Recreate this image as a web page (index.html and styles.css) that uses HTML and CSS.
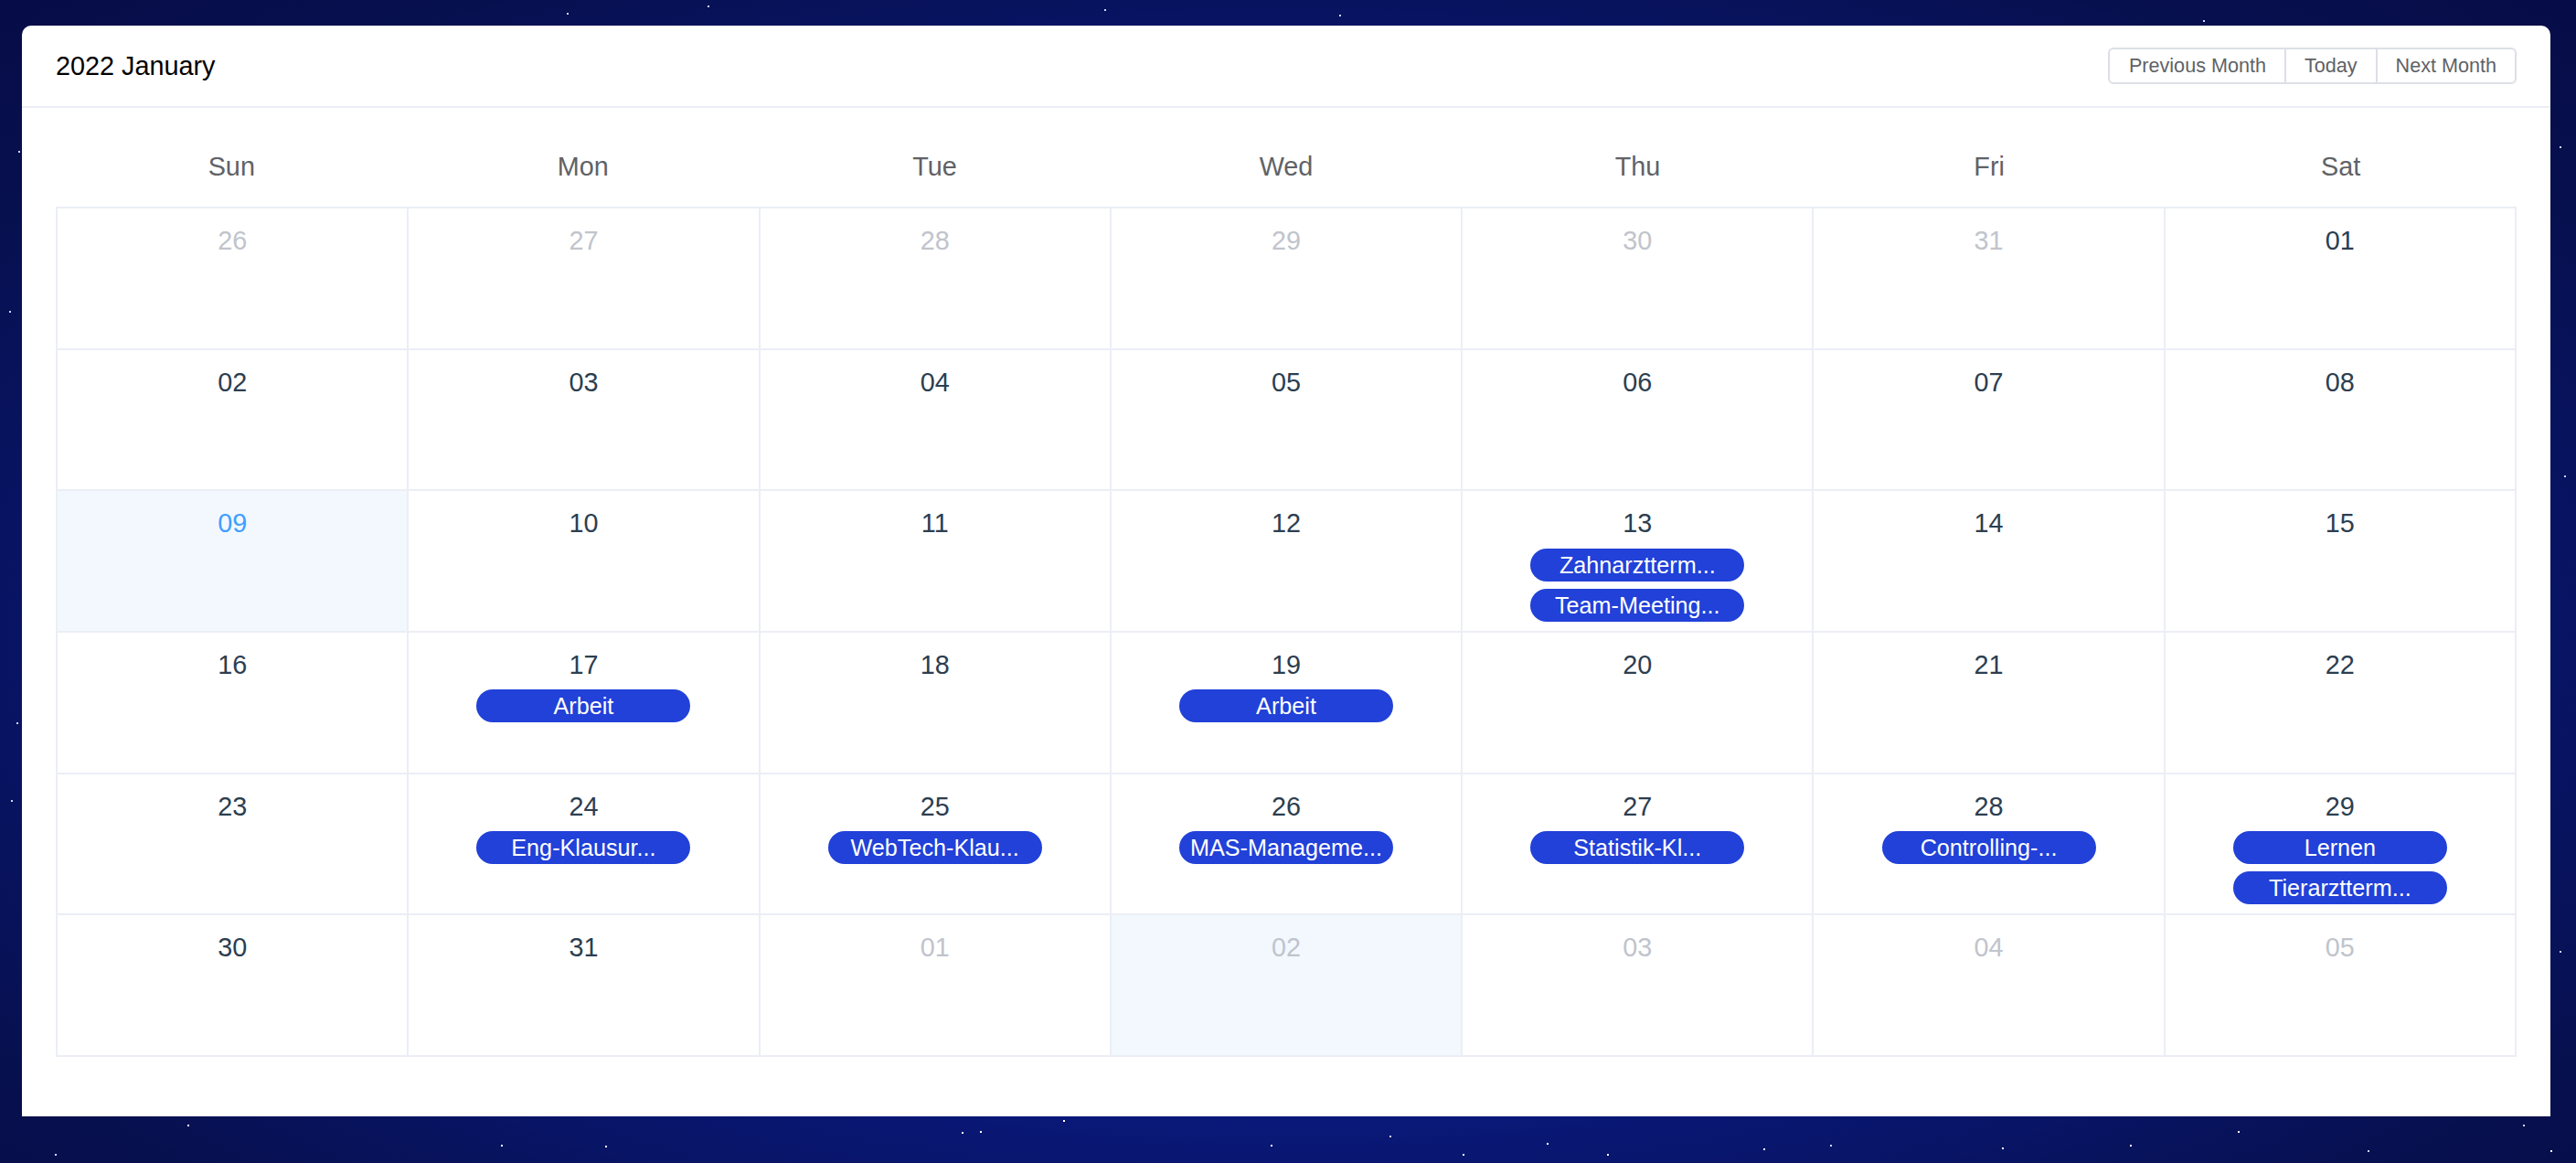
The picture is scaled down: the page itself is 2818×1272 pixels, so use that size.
FILE: index.html
```html
<!DOCTYPE html>
<html lang="de">
<head>
<meta charset="utf-8">
<title>Calendar</title>
<link rel="stylesheet" href="styles.css">
</head>
<body>
<div class="stars" aria-hidden="true"></div>
<div class="page">
  <div class="calendar">
    <div class="cal-header">
      <div class="cal-title">2022 January</div>
      <div class="btn-group">
        <button class="btn">Previous Month</button>
        <button class="btn">Today</button>
        <button class="btn">Next Month</button>
      </div>
    </div>
    <div class="cal-body">
      <div class="weekdays">
        <div class="wd">Sun</div><div class="wd">Mon</div><div class="wd">Tue</div><div class="wd">Wed</div><div class="wd">Thu</div><div class="wd">Fri</div><div class="wd">Sat</div>
      </div>
      <div class="grid">
        <div class="cell other"><div class="num">26</div></div>
        <div class="cell other"><div class="num">27</div></div>
        <div class="cell other"><div class="num">28</div></div>
        <div class="cell other"><div class="num">29</div></div>
        <div class="cell other"><div class="num">30</div></div>
        <div class="cell other"><div class="num">31</div></div>
        <div class="cell"><div class="num">01</div></div>

        <div class="cell"><div class="num">02</div></div>
        <div class="cell"><div class="num">03</div></div>
        <div class="cell"><div class="num">04</div></div>
        <div class="cell"><div class="num">05</div></div>
        <div class="cell"><div class="num">06</div></div>
        <div class="cell"><div class="num">07</div></div>
        <div class="cell"><div class="num">08</div></div>

        <div class="cell today"><div class="num">09</div></div>
        <div class="cell"><div class="num">10</div></div>
        <div class="cell"><div class="num">11</div></div>
        <div class="cell"><div class="num">12</div></div>
        <div class="cell"><div class="num">13</div><div class="event">Zahnarztterm...</div><div class="event">Team-Meeting...</div></div>
        <div class="cell"><div class="num">14</div></div>
        <div class="cell"><div class="num">15</div></div>

        <div class="cell"><div class="num">16</div></div>
        <div class="cell"><div class="num">17</div><div class="event">Arbeit</div></div>
        <div class="cell"><div class="num">18</div></div>
        <div class="cell"><div class="num">19</div><div class="event">Arbeit</div></div>
        <div class="cell"><div class="num">20</div></div>
        <div class="cell"><div class="num">21</div></div>
        <div class="cell"><div class="num">22</div></div>

        <div class="cell"><div class="num">23</div></div>
        <div class="cell"><div class="num">24</div><div class="event">Eng-Klausur...</div></div>
        <div class="cell"><div class="num">25</div><div class="event">WebTech-Klau...</div></div>
        <div class="cell"><div class="num">26</div><div class="event">MAS-Manageme...</div></div>
        <div class="cell"><div class="num">27</div><div class="event">Statistik-Kl...</div></div>
        <div class="cell"><div class="num">28</div><div class="event">Controlling-...</div></div>
        <div class="cell"><div class="num">29</div><div class="event">Lernen</div><div class="event">Tierarztterm...</div></div>

        <div class="cell"><div class="num">30</div></div>
        <div class="cell"><div class="num">31</div></div>
        <div class="cell other"><div class="num">01</div></div>
        <div class="cell other selected"><div class="num">02</div></div>
        <div class="cell other"><div class="num">03</div></div>
        <div class="cell other"><div class="num">04</div></div>
        <div class="cell other"><div class="num">05</div></div>
      </div>
    </div>
  </div>
</div>
</body>
</html>
```

FILE: styles.css
```css
* { box-sizing: border-box; }

html, body {
  margin: 0;
  width: 2818px;
  height: 1272px;
  overflow: hidden;
}

body {
  font-family: "Liberation Sans", Arial, sans-serif;
  background: radial-gradient(ellipse 75% 80% at 50% 55%, #0b2098 0%, #0a1a82 45%, #07104f 80%, #060b45 100%);
  position: relative;
}

.stars {
  position: absolute;
  left: 0;
  top: 0;
  width: 2px;
  height: 2px;
  background: transparent;
  box-shadow:
    620px 14px #cfd6ff, 1465px 16px #cfd6ff, 1208px 10px #cfd6ff, 774px 6px #cfd6ff,
    2410px 22px #cfd6ff, 20px 165px #cfd6ff, 10px 340px #cfd6ff, 2800px 160px #cfd6ff,
    2805px 520px #cfd6ff, 18px 790px #cfd6ff, 12px 875px #cfd6ff, 2800px 1040px #cfd6ff,
    60px 1262px #cfd6ff, 205px 1230px #ffffff, 548px 1252px #ffffff, 662px 1253px #ffffff,
    1052px 1238px #ffffff, 1072px 1237px #ffffff, 1163px 1225px #ffffff, 1390px 1252px #ffffff,
    1520px 1242px #cfd6ff, 1600px 1262px #ffffff, 1692px 1250px #ffffff, 1758px 1262px #ffffff,
    1929px 1256px #ffffff, 2002px 1252px #cfd6ff, 2190px 1255px #ffffff, 2330px 1252px #ffffff,
    2448px 1237px #ffffff, 2590px 1258px #cfd6ff, 2790px 1258px #ffffff, 2760px 1230px #cfd6ff;
}

.page {
  padding: 28px 0 0 24px;
}

.calendar {
  width: 2766px;
  background: #ffffff;
  border-radius: 10px 10px 0 0;
}

.cal-header {
  display: flex;
  justify-content: space-between;
  align-items: center;
  height: 90px;
  padding: 0 37px 0 37px;
  border-bottom: 2px solid #ebeef5;
}

.cal-title {
  font-size: 28.8px;
  color: #000000;
}

.btn-group {
  display: flex;
}

.btn {
  font-family: "Liberation Sans", Arial, sans-serif;
  font-size: 21.6px;
  color: #606266;
  background: #ffffff;
  border: 2px solid #dcdfe6;
  height: 40px;
  padding: 0 20px;
  margin: 0;
  line-height: 36px;
  border-radius: 0;
}

.btn + .btn {
  margin-left: -2px;
}

.btn:first-child {
  border-radius: 6px 0 0 6px;
  padding: 0 20px 0 21px;
}

.btn:last-child {
  border-radius: 0 6px 6px 0;
}

.cal-body {
  padding: 21.6px 37px 65px 37px;
}

.weekdays {
  display: grid;
  grid-template-columns: repeat(7, 1fr);
}

.wd {
  text-align: center;
  font-size: 28.8px;
  line-height: 43.2px;
  padding: 21.6px 0;
  color: #606266;
}

.grid {
  display: grid;
  grid-template-columns: repeat(7, 1fr);
  border-top: 2px solid #ebeef5;
  border-left: 2px solid #ebeef5;
}

.cell {
  height: 154.67px;
  border-right: 2px solid #ebeef5;
  border-bottom: 2px solid #ebeef5;
  padding-top: 14px;
  text-align: center;
  color: #2c3e50;
  display: flex;
  flex-direction: column;
  align-items: center;
}

.num {
  font-size: 28.8px;
  line-height: 43.2px;
}

.cell.other {
  color: #c0c4cc;
}

.cell.today {
  background: #f2f8fe;
  color: #409eff;
}

.cell.selected {
  background: #f2f8fe;
}

.event {
  width: 234px;
  height: 36px;
  line-height: 36px;
  margin-top: 5px;
  border-radius: 18px;
  background: #2141d8;
  color: #ffffff;
  font-size: 25.2px;
  white-space: nowrap;
  overflow: hidden;
}

.event + .event {
  margin-top: 8px;
}
```
